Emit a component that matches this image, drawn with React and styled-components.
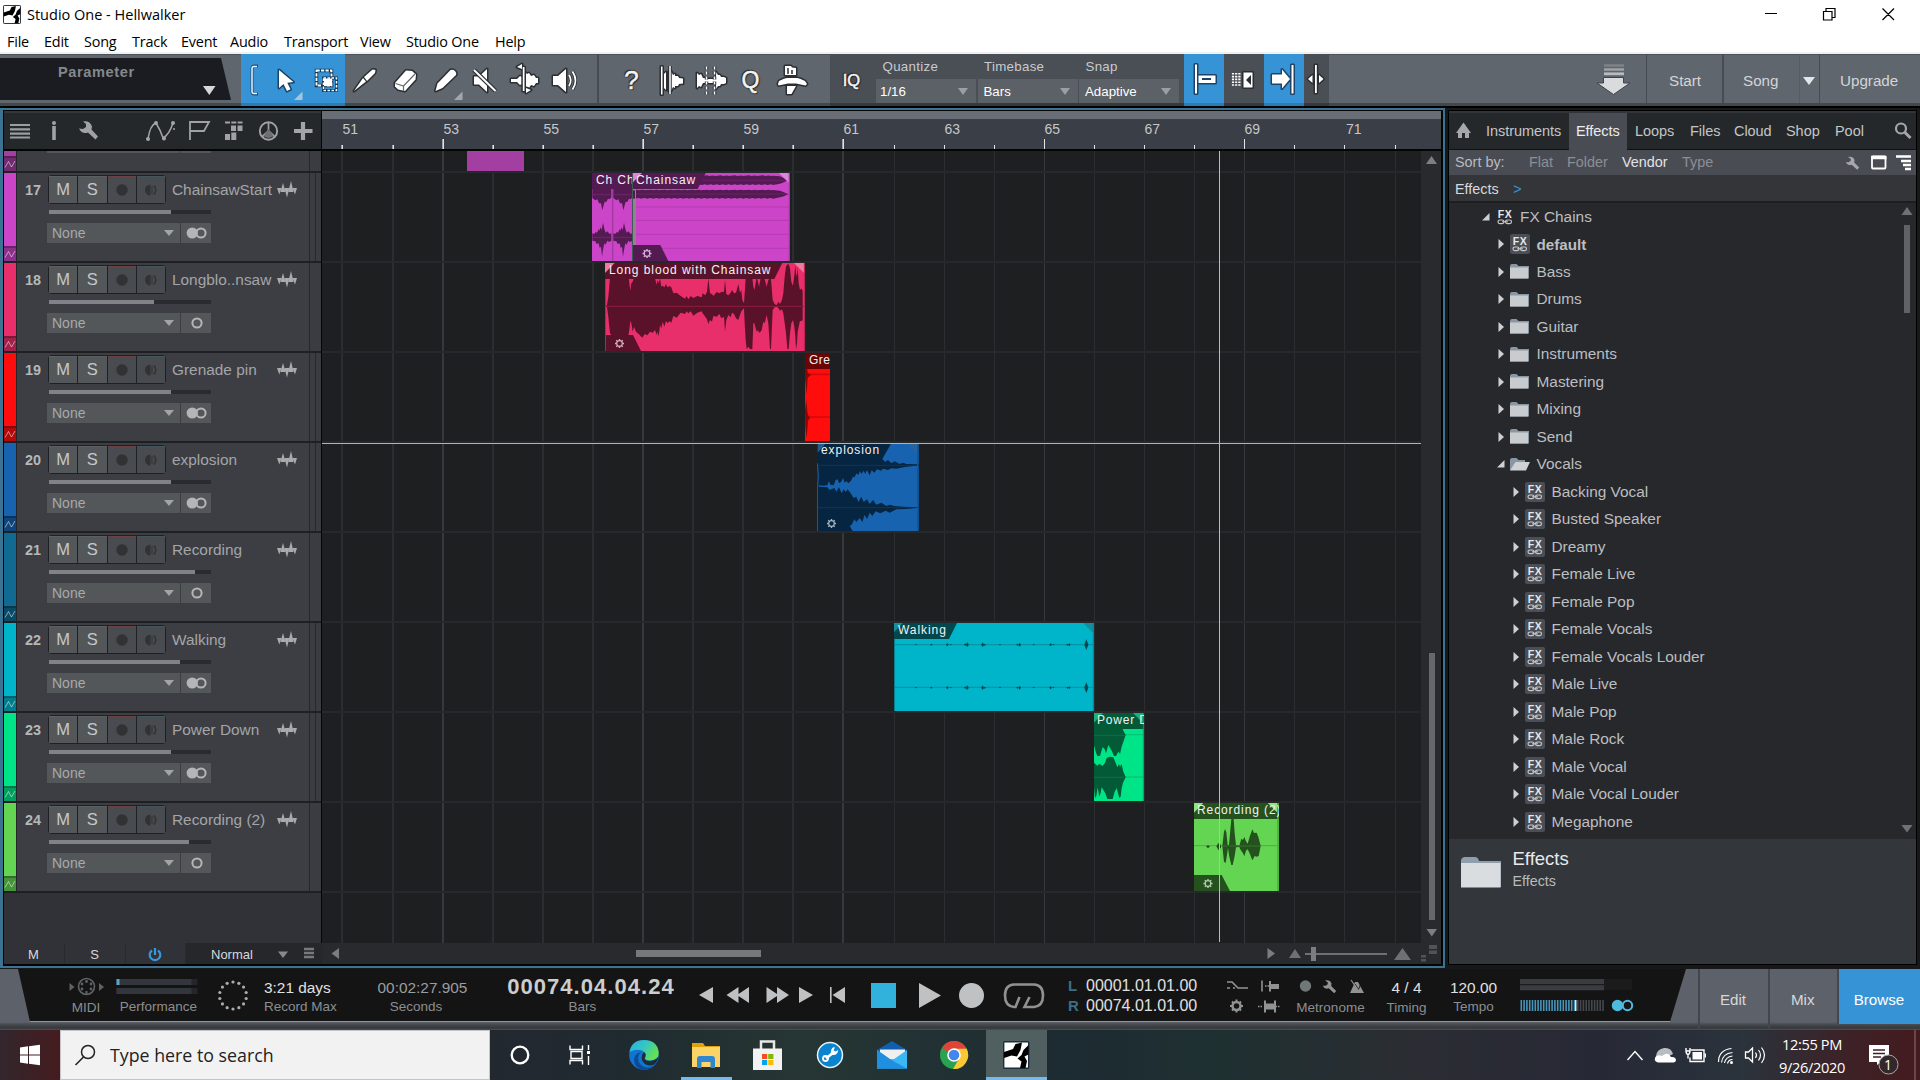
import React from "react";
import styled, { createGlobalStyle, css } from "styled-components";

const UI = `"Liberation Sans", Arial, sans-serif`;
const WIN = `"Open Sans", "Noto Sans", sans-serif`;

const Global = createGlobalStyle`
  * { box-sizing: border-box; }
  html, body { margin: 0; padding: 0; background: #000; }
  body { font-family: ${UI}; overflow: hidden; }
  svg { display: block; flex: none; }
`;

const Screen = styled.div`
  width: 1920px;
  height: 1080px;
  display: flex;
  flex-direction: column;
  background: #000;
  overflow: hidden;
  white-space: nowrap;
`;

/* Drawing whose coordinates are expressed in screen space. */
const Art = ({ x, y, w, h, children }) => (
  <svg width={w} height={h} viewBox={`${x} ${y} ${w} ${h}`} fill="none">
    {children}
  </svg>
);

const Spacer = styled.div`
  flex: ${(p) => (p.$w ? "none" : 1)};
  width: ${(p) => p.$w || 0}px;
`;

/* ---------- window chrome ---------- */

const TitleBar = styled.header`
  height: 28px;
  flex: none;
  display: flex;
  align-items: center;
  background: #fff;
  color: #000;
  font: 14.5px ${WIN};
`;
const TitleText = styled.span`
  margin-left: 6px;
  flex: 1;
`;
const MenuBar = styled.nav`
  height: 26px;
  flex: none;
  display: flex;
  align-items: center;
  padding: 2px 0 0 7px;
  background: #fff;
  border-bottom: 2px solid #eef0f1;
  color: #000;
  font: 14.4px ${WIN};
`;
const MenuItem = styled.span`
  width: ${(p) => p.$w}px;
  letter-spacing: -0.2px;
`;

const menus = [["File", 37], ["Edit", 40], ["Song", 48], ["Track", 49], ["Event", 49], ["Audio", 54], ["Transport", 76], ["View", 46], ["Studio One", 89], ["Help", 40]];

const LogoArt = () => (
  <>
    <rect x="0.7" y="0.7" width="25" height="26.6" rx="1" fill="#fff" stroke="#1d2c3a" strokeWidth="1.4" />
    <path d="M1 11 L10 8 L12.500 3 L19 1.500 L17.500 9 L14 15.500 L8.500 14.500 L1 17Z" fill="#000" />
    <path d="M25.500 4 L20.500 9 L18.500 14 L14.500 17.500 L18.500 20.500 L17 27 H22.500 L24 20 L21.500 15.500 L25.500 13.500Z" fill="#000" />
  </>
);

/* ---------- toolbar ---------- */

const ToolbarRow = styled.div`
  height: 54px;
  flex: none;
  display: flex;
  background: linear-gradient(#4b5158 0 1px, #5f666e 1px 49px, #43484d 49px 52px, #000 52px);
`;
const ParameterWell = styled.div`
  width: 231px;
  height: 42px;
  margin: 4px 10px 0 0;
  background: #1a1c21;
  clip-path: polygon(0 0, 221px 0, 231px 100%, 0 100%);
  display: flex;
  color: #85888c;
  font: bold 14.6px/28px ${UI};
  padding-left: 58px;
  letter-spacing: 0.6px;
`;
const ParameterName = styled.span`width: 145px;`;
const ToolCell = styled.div`
  width: ${(p) => p.$w}px;
  height: 52px;
  flex: none;
  display: flex;
  justify-content: center;
  align-items: center;
  background: ${(p) => (p.$on ? "linear-gradient(#3693d6 0 49px, #2d7bb3 49px)" : p.$dark ? "linear-gradient(#4a4e55 0 49px, #36393e 49px)" : "transparent")};
  color: #f4f4f4;
  font: ${(p) => p.$fs || 22}px ${UI};
  padding-left: ${(p) => p.$pl || 0}px;
  ${(p) => p.$glyph && css`
    text-shadow: 0 0 1px #222, 0 0 2px #222, 1px 1px 1px #222, -1px -1px 1px #222;
    -webkit-text-stroke: 0.5px #f4f4f4;
  `}
`;
const Divider = styled.div`
  width: ${(p) => p.$w || 2}px;
  height: 49px;
  flex: none;
  background: ${(p) => p.$c || "#474c53"};
`;
const FieldGroup = styled.div`
  width: 308px;
  height: 52px;
  flex: none;
  display: flex;
  gap: 1.5px;
  background: linear-gradient(#4a4e55 0 49px, #36393e 49px);
`;
const Field = styled.div`
  width: 100px;
  padding-top: 1px;
  color: #c9cbce;
  font: 13.3px ${UI};
  display: flex;
  flex-direction: column;
`;
const FieldLabel = styled.span`
  height: 24px;
  line-height: 23px;
  padding-left: 6.5px;
  letter-spacing: 0.3px;
`;
const FieldValue = styled.div`
  height: 24px;
  padding: 0 8px 0 ${(p) => p.$pl || 6}px;
  display: flex;
  align-items: center;
  justify-content: space-between;
  background: #5c6067;
  color: #fff;
`;
const Caret = styled.i`
  border: ${(p) => p.$s || 5.5}px solid transparent;
  border-top: ${(p) => p.$h || 7}px solid ${(p) => p.$c || "#9b9ea3"};
  border-bottom: 0;
`;
const PageButton = styled.div`
  width: ${(p) => p.$w}px;
  height: 49px;
  padding-left: ${(p) => p.$pl || 0}px;
  display: flex;
  align-items: center;
  padding-top: 4px;
  color: #d3d5d7;
  font: 15.2px ${UI};
`;

const ol = { stroke: "#2b2e33", strokeWidth: 3, strokeLinejoin: "round", paintOrder: "stroke" };

const Toolbar = () => (
  <ToolbarRow>
    <ParameterWell>
      <ParameterName>Parameter</ParameterName>
      <Art x={203} y={58} w={13} h={42}><path d="M203 86h12.5l-6.2 9z" fill="#d5d7d9" /></Art>
    </ParameterWell>
    <ToolCell $w={24} $on><Art x={241} y={54} w={24} h={52}><path d="M258 66h-3.5q-2.500 0-2.500 2.500v23q0 2.500 2.500 2.500h3.500" stroke="#1f4f77" strokeWidth="3" /><path d="M257 66.500h-3q-2 0-2 2v23q0 2 2 2h3" stroke="#e8f2fa" strokeWidth="1.500" /></Art></ToolCell>
    <ToolCell $w={42} $on><Art x={265} y={54} w={42} h={52}>
      <path d="M279 70v18l4.500-4 3.500 7 3.500-1.700-3.200-6.600 6-.6z" fill="#fff" {...ol} stroke="#1c4468" />
      <path d="M302.500 91.500v8.500h-8.500z" fill="#a5c4dd" /></Art></ToolCell>
    <ToolCell $w={38} $on><Art x={307} y={54} w={38} h={52}>
      <rect x="316.500" y="70.500" width="15" height="15" stroke="#17395a" strokeWidth="3.500" />
      <rect x="316.500" y="70.500" width="15" height="15" stroke="#fff" strokeWidth="1.800" strokeDasharray="3.200 1.300" />
      <rect x="323.500" y="78" width="13" height="12.500" stroke="#17395a" strokeWidth="3" />
      <rect x="323.500" y="78" width="13" height="12.500" stroke="#fff" strokeWidth="1.500" strokeDasharray="2.500 1.500" />
      <rect x="324" y="78.500" width="8" height="7.500" fill="#fff" /></Art></ToolCell>
    <ToolCell $w={40}><Art x={345} y={54} w={40} h={52}>
      <path d="M354 91l9-13 3 3.500zM364 77l8.500-7.500 3 .5-.5 3-8 8z" fill="#fff" {...ol} /></Art></ToolCell>
    <ToolCell $w={41}><Art x={385} y={54} w={41} h={52}>
      <path d="M395 83l11-12.500 6 .5 4 3.500-.5 5-10.500 11.500-7-1.500-3-3z" fill="#fff" {...ol} />
      <path d="M395.500 83.500l8 2.500 11.500-12M403.500 86v5" stroke="#666a70" strokeWidth="1.200" /></Art></ToolCell>
    <ToolCell $w={39}><Art x={426} y={54} w={39} h={52}>
      <path d="M435.500 91l2-7.500 13-13.500q2.500-1 4.500 1t1 4l-13.500 13z" fill="#fff" {...ol} />
      <path d="M462.500 91.500v8.500h-8.500z" fill="#a3a7ac" /></Art></ToolCell>
    <ToolCell $w={38}><Art x={465} y={54} w={38} h={52}>
      <path d="M474 76.500h5l8-7.500v23l-8-7.500h-5z" fill="#fff" {...ol} />
      <path d="M474 70l21.500 21" stroke="#2b2e33" strokeWidth="4.500" /><path d="M474 70l21.500 21" stroke="#fff" strokeWidth="2" /></Art></ToolCell>
    <ToolCell $w={42}><Art x={503} y={54} w={42} h={52}>
      <path d="M511 79h6l3-3 2 1v7l-2 1-3-3h-6zM525 72l2 2 2-1 2 3 3-1 2 3h2v5h-2l-2 3-3-1-2 3-2-1-2 2z" fill="#fff" {...ol} />
      <path d="M522 64v5l-5-2zM526 93v-5l5 2zM522.800 67h1.700v24h-1.700z" fill="#fff" {...ol} /></Art></ToolCell>
    <ToolCell $w={52}><Art x={545} y={54} w={52} h={52}>
      <path d="M553 76h5l8-7v23l-8-7h-5z" fill="#fff" {...ol} />
      <path d="M569 75q3.500 5.500 0 11M572.500 71.500q6 9 0 18" stroke="#2b2e33" strokeWidth="3.500" /><path d="M569 75q3.500 5.500 0 11M572.500 71.500q6 9 0 18" stroke="#fff" strokeWidth="1.800" /></Art></ToolCell>
    <Divider />
    <ToolCell $w={59} $pl={6} $glyph $fs={26}>?</ToolCell>
    <ToolCell $w={32}><Art x={658} y={54} w={32} h={52}>
      <path d="M661 66.500h1.500v28h-1.500zM664 74l2-2v18l-2-2zM669 71h2l2 4 2-1v2h3l1 2 4 .5v5l-4 .5-1 2h-3v2l-2-1-2 4h-2z" fill="#fff" {...ol} /><path d="M670 66v28" stroke="#2b2e33" strokeWidth="3.500" /><path d="M670 66v28" stroke="#fff" strokeWidth="1.500" /></Art></ToolCell>
    <ToolCell $w={45}><Art x={690} y={54} w={45} h={52}>
      <path d="M697 73l2 2 2-1 2 4h3v5h-3l-2 4-2-1-2 2zM716 72l2 3h2l1 2h3l2 1v5l-2 1h-3l-1 2h-2l-2 3zM706 79h10v4h-10z" fill="#fff" {...ol} />
      <path d="M706.500 66.500v28M714.500 66.500v28" stroke="#2b2e33" strokeWidth="3.500" strokeDasharray="3 2" /><path d="M706.500 66.500v28M714.500 66.500v28" stroke="#fff" strokeWidth="1.500" strokeDasharray="3 2" /></Art></ToolCell>
    <ToolCell $w={31} $glyph $fs={23}>Q</ToolCell>
    <ToolCell $w={64}><Art x={766} y={54} w={64} h={52}>
      <path d="M785 75v-9h6l1 1.500 4 .5v7zM778 84l1-3q6-3 8-3h10q2 0 8 3l2 3-1.500 1.500-9.500-2h-8l-9.500 2zM787 86h9l-4.500 8h-4.500z" fill="#fff" {...ol} />
      <path d="M788 68v6M792 70v4" stroke="#2b2e33" strokeWidth="1.500" /></Art></ToolCell>
    <ToolCell $w={43} $dark $glyph $fs={16.500}>IQ</ToolCell>
    <ToolCell $w={3} $dark />
    <FieldGroup>
      {[["Quantize", "1/16"], ["Timebase", "Bars"], ["Snap", "Adaptive"]].map(([l, v], i) => (
        <Field key={l}>
          <FieldLabel>{l}</FieldLabel>
          <FieldValue $pl={i ? 6 : 4}>{v}<Caret /></FieldValue>
        </Field>
      ))}
    </FieldGroup>
    <ToolCell $w={40} $on><Art x={1184} y={54} w={40} h={52}>
      <path d="M1195 64.500h2v29h-2zM1198.500 75.500h17v7.500h-17z" fill="#fff" {...ol} stroke="#1c4468" /><path d="M1202 79h9" stroke="#1c4468" strokeWidth="2" /></Art></ToolCell>
    <ToolCell $w={40} $dark><Art x={1224} y={54} w={40} h={52}>
      <path d="M1233 73v14M1236.200 73v14M1239.400 73v14" stroke="#fff" strokeWidth="2.200" strokeDasharray="1.600 1.200" />
      <path d="M1243.500 72.500h9v15h-9z" fill="#fff" {...ol} /><path d="M1251 75v10l-5-5z" fill="#2b2e33" /></Art></ToolCell>
    <ToolCell $w={40} $on><Art x={1264} y={54} w={40} h={52}>
      <path d="M1272 74.500h10v-5l8 9.500-8 9.500v-5h-10zM1291.500 65h2v28.500h-2z" fill="#fff" {...ol} stroke="#1c4468" /></Art></ToolCell>
    <ToolCell $w={25} $dark><Art x={1304} y={54} w={25} h={52}>
      <path d="M1315 65h1.800v28h-1.800zM1312.500 75v8l-4.500-4zM1319 75v8l4.500-4z" fill="#fff" {...ol} /></Art></ToolCell>
    <Spacer />
    <Art x={1590} y={54} w={56} h={52}>
      <path d="M1604 65.500h20" stroke="#7d8389" strokeWidth="2.500" /><path d="M1604 69.500h20" stroke="#9da2a7" strokeWidth="2.500" /><path d="M1604 73.800h20" stroke="#b8bbbf" strokeWidth="2.800" />
      <path d="M1603.500 77.500h20v5.500h6.500l-16.500 11.500-16.500-11.500h6.500z" fill="#d9dbdd" stroke="#3f4348" /></Art>
    <Divider $w={1} />
    <PageButton $w={75} $pl={22}>Start</PageButton>
    <Divider />
    <PageButton $w={75} $pl={19}>Song</PageButton>
    <Divider $w={1} $c="#565c64" />
    <PageButton $w={19} $pl={3}><Caret $s={6} $h={8} $c="#e4e6e7" /></PageButton>
    <Divider $w={1} />
    <PageButton $w={100} $pl={20}>Upgrade</PageButton>
  </ToolbarRow>
);

/* ---------- arrange panel ---------- */

const Workspace = styled.main`
  height: 861px;
  flex: none;
  display: flex;
  background: #17181a;
`;
const ArrangePanel = styled.section`
  width: 1445px;
  height: 860px;
  border: 2px solid #3a7492;
  border-left-width: 3px;
  padding: 1px 2px 2px 1px;
  background: #050505;
  display: flex;
  flex-direction: column;
`;
const ArrangeTop = styled.div`
  height: 832px;
  display: flex;
  gap: 1px;
`;
const TrackColumn = styled.div`
  width: 317px;
  display: flex;
  flex-direction: column;
`;
const TrackTools = styled.div`
  height: 38px;
  flex: none;
  background: linear-gradient(#33363a 0 2px, #25282b 2px);
`;
const TrackList = styled.div`
  margin-top: 2px;
  flex: 1;
  background: #303237;
`;
const TrackRow = styled.div`
  height: ${(p) => p.$h || 90}px;
  border-bottom: 2px solid #1f2023;
  display: flex;
  background: #3c3e43;
`;
const ColorStrip = styled.div`
  width: 13px;
  border-right: 1px solid #25262a;
  display: flex;
  flex-direction: column;
  background: ${(p) => p.$c};
`;
const AutoTag = styled.div`
  margin-top: auto;
  height: 15px;
  background: rgba(0, 0, 0, 0.3);
  border-top: 2px solid rgba(0, 0, 0, 0.25);
`;
const NumberCell = styled.div`
  width: 30px;
  padding: 8px 0 0 8px;
  color: #b5b7b9;
  font: bold 14.400px/18px ${UI};
`;
const TrackBody = styled.div`
  flex: 1;
  display: flex;
  flex-direction: column;
`;
const TrackHead = styled.div`
  height: 32px;
  padding-top: 2px;
  display: flex;
  align-items: flex-start;
`;
const ButtonGroup = styled.div`
  margin-left: 1px;
  width: 118px;
  height: 29px;
  padding: 1px;
  border-radius: 4px;
  background: #1e2023;
  display: flex;
  gap: 1px;
`;
const PadButton = styled.div`
  flex: 1;
  display: flex;
  align-items: center;
  justify-content: center;
  padding-bottom: 1px;
  background: ${(p) => (p.$dim ? "#484b4f" : "#54575a")};
  border-top: 1px solid ${(p) => p.$top || "#5c6063"};
  color: #c6c8c9;
  font: 16.500px ${UI};
`;
const TrackName = styled.span`
  width: 105px;
  margin-left: 6px;
  line-height: 29px;
  font-size: 15.400px;
  color: #a3a5a8;
`;
const Fader = styled.div`
  margin: 5px 0 0 2px;
  width: 162px;
  height: 4px;
  background: #292b2f;
`;
const FaderFill = styled.div`
  height: 4px;
  width: ${(p) => p.$w}px;
  background: #7f8286;
`;
const InputRow = styled.div`
  margin-top: 9px;
  height: 20px;
  display: flex;
  gap: 1px;
`;
const InputSelect = styled.div`
  width: 133px;
  padding: 0 6px 0 5px;
  background: #54575a;
  color: #a7a9ab;
  font: 14px ${UI};
  display: flex;
  align-items: center;
  justify-content: space-between;
`;
const ChannelMode = styled.div`
  width: 30px;
  padding-left: 1px;
  background: #54575a;
  display: flex;
  align-items: center;
  justify-content: center;
`;
const TrackMeter = styled.div`
  width: 12px;
  border-left: 1px solid #27282b;
  padding-left: 5px;
  background: #3a3c41;
`;
const MeterSplit = styled.div`
  height: 100%;
  width: 1px;
  background: ${(p) => (p.$stereo ? "#27282b" : "transparent")};
`;

const tracks = [
  [17, "ChainsawStart", "#cc45c8", 122, 1],
  [18, "Longblo..nsaw", "#e82f6b", 105, 0],
  [19, "Grenade pin", "#ff0d0d", 122, 1],
  [20, "explosion", "#1763b0", 122, 1],
  [21, "Recording", "#116a92", 146, 0],
  [22, "Walking", "#00b5c9", 131, 1],
  [23, "Power Down", "#00e488", 122, 1],
  [24, "Recording (2)", "#63d552", 140, 0],
];

const Zig = () => (
  <svg width="12" height="13" viewBox="0 0 12 13" fill="none"><path d="M1 9.500l3.500-6 3 5.500 3.500-6" stroke="rgba(255,255,255,.5)" /></svg>
);
const Stereo = ({ c = "#b3b5b7" }) => (
  <svg width="22" height="12" viewBox="0 0 22 12" fill="none"><circle cx="6.200" cy="6" r="5.600" fill={c} /><circle cx="15" cy="6" r="4.600" stroke={c} strokeWidth="2" /></svg>
);
const Mono = () => (
  <svg width="12" height="12" viewBox="0 0 12 12" fill="none"><circle cx="6" cy="6" r="4.600" stroke="#b3b5b7" strokeWidth="2" /></svg>
);

const Track = ({ t: [n, name, color, fill, stereo] }) => (
  <TrackRow>
    <ColorStrip $c={color}><AutoTag><Zig /></AutoTag></ColorStrip>
    <NumberCell>{n}</NumberCell>
    <TrackBody>
      <TrackHead>
        <ButtonGroup>
          <PadButton>M</PadButton>
          <PadButton>S</PadButton>
          <PadButton $dim $top="#6b4144"><svg width="12" height="12"><circle cx="6" cy="6" r="5.700" fill="#303234" /></svg></PadButton>
          <PadButton $dim $top="#44565c"><svg width="12" height="12" viewBox="0 0 12 12" fill="none"><path d="M5.500 0.500a5.500 5.500 0 0 0 0 11z" fill="#303234" /><path d="M7 2v8" stroke="#303234" /><path d="M9 1.500q3.500 4.500 0 9" stroke="#303234" strokeWidth="1.500" /></svg></PadButton>
        </ButtonGroup>
        <TrackName>{name}</TrackName>
        <svg width="20" height="30" viewBox="0 0 20 30" fill="#a9abad">
          <path d="M0 13H4.600L2.300 19.500Z" /><path d="M3.400 17L6 8L8.600 17Z" /><path d="M7.400 13H12.400L10 22.500Z" /><path d="M11.200 17L14 6L16.600 17Z" /><path d="M15.400 13H20L18 19.500Z" />
        </svg>
      </TrackHead>
      <Fader><FaderFill $w={fill} /></Fader>
      <InputRow>
        <InputSelect>None<Caret $s={5} $h={6} $c="#a2a4a6" /></InputSelect>
        <ChannelMode>{stereo ? <Stereo /> : <Mono />}</ChannelMode>
      </InputRow>
    </TrackBody>
    <TrackMeter><MeterSplit $stereo={stereo} /></TrackMeter>
  </TrackRow>
);

const TimelineColumn = styled.div`
  flex: 1;
  display: flex;
  flex-direction: column;
`;
const Ruler = styled.div`
  position: relative;
  height: 38px;
  flex: none;
  background: linear-gradient(#696d75 0 8px, #3a3e46 8px);
`;
const RulerLabel = styled.span`
  position: absolute;
  top: 10px;
  line-height: 16px;
  font-size: 14px;
  color: #c5c7c9;
`;
const TimelineBody = styled.div`
  margin-top: 2px;
  flex: 1;
  display: flex;
`;
const Canvas = styled.div`
  position: relative;
  width: 1099px;
  background: #1e1f21;
  overflow: hidden;
`;
const ScrollGutter = styled.div`
  flex: 1;
  background: #292a2e;
`;
const Clip = styled.div`
  position: absolute;
  left: ${(p) => p.$x - 322}px;
  top: ${(p) => p.$y - 151}px;
  width: ${(p) => p.$w}px;
  height: ${(p) => p.$h || 88}px;
  background: ${(p) => p.$c};
  overflow: hidden;
  svg { position: absolute; left: 0; top: 0; }
`;
const ClipName = styled.span`
  position: absolute;
  left: ${(p) => p.$l || 4}px;
  top: 0;
  line-height: 15px;
  font-size: 12px;
  letter-spacing: ${(p) => p.$ls || 0.93}px;
  color: #f2f2f2;
`;

const barX = (b) => Math.round(442.6 + (b - 53) * 50.1);
const bars = Array.from({ length: 22 }, (_, i) => 51 + i);

const mirror = (pts) =>
  pts.map(([x, a]) => `${x},${a}`).join(" ") + " " + [...pts].reverse().map(([x, , b]) => `${x},${b}`).join(" ");

const longWave = [[138,467,470],[141,465,472],[145,440,500],[150,385,550],[155,340,556],[205,375,556],[208,400,540],[211,422,512],[214,400,520],[218,395,545],[222,385,530],[228,380,545],[236,380,552],[247,380,563],[254,380,552],[262,380,556],[270,380,545],[278,380,548],[285,385,540],[290,404,555],[293,390,545],[296,400,560],[300,385,525],[304,410,535],[308,407,515],[313,412,530],[318,402,512],[322,412,520],[328,408,514],[334,412,518],[340,430,498],[350,428,503],[362,438,488],[375,446,492],[380,438,484],[385,448,490],[392,438,484],[400,444,497],[412,438,488],[425,442,484],[428,430,490],[436,436,500],[441,425,508],[445,385,522],[450,430,510],[456,432,515],[460,438,498],[470,426,500],[478,430,492],[484,426,505],[492,425,500],[495,390,545],[499,432,510],[505,436,495],[512,428,502],[516,420,488],[522,430,492],[528,428,505],[535,402,510],[540,428,495],[544,420,484],[547,450,480],[552,460,475],[554,430,520],[557,385,570],[560,385,597],[565,385,590],[570,385,597],[577,385,597],[580,410,520],[583,420,520],[587,400,535],[590,380,545],[594,395,540],[597,410,548],[602,385,545],[605,385,540],[610,385,515],[614,388,520],[620,410,495],[625,390,520],[630,385,597],[633,388,597],[638,450,480],[644,463,472],[650,465,470],[655,455,474],[660,462,482],[666,450,478],[670,430,490],[674,380,520],[678,350,550],[682,343,597],[686,343,597],[690,355,550],[694,395,520],[699,408,510],[703,375,530],[706,345,560],[708,370,597],[711,380,580],[713,350,545],[716,400,530],[720,420,512],[724,415,514],[728,422,510]];

const expBlue1 = "778,1006 790,1007 803,1006 808,993 812,1004 822,1006 828,990 834,988 838,1000 844,996 850,984 855,998 860,993 866,1000 874,992 880,980 885,982 890,970 896,975 901,963 905,972 912,962 917,972 922,960 930,976 936,961 944,968 952,958 964,962 970,956 985,960 995,955 1010,956 1035,951 1068,947 1077,947 1077,1072 1068,1072 1030,1070 1004,1068 990,1064 980,1068 965,1058 950,1064 940,1050 930,1062 922,1048 912,1056 905,1040 896,1056 890,1040 882,1044 872,1028 864,1018 858,1026 852,1018 846,1030 838,1012 830,1025 824,1014 810,1020 803,1012 778,1010";
const expBlue2 = "1077,1074 1068,1074 1040,1077 1010,1078 990,1088 978,1082 962,1090 948,1084 938,1098 930,1088 922,1108 915,1094 908,1116 900,1104 890,1116 884,1108 876,1124 870,1128 879,1143 1077,1143";
const expBlue0 = "968,927 994,881 1077,881 1077,943 1068,943 1040,942 1030,938 1020,942 1005,934 995,940 985,930 976,936";

const Cog = ({ x, y, c }) => (
  <g stroke={c} transform={`translate(${x} ${y})`}>
    <circle r="2.800" strokeWidth="1.200" />
    <path d="M0-4.500v1.500M0 3v1.500M-4.500 0h1.500M3 0h1.500M-3.200-3.200l1 1M2.200 2.200l1 1M3.200-3.200l-1 1M-2.200 2.200l-1 1" strokeWidth="1.400" />
  </g>
);

/* Waveform layer: vertices use a grid three times finer than the clip. */
const Wave = ({ ox, oy, w, children }) => (
  <svg width={w} height="88" viewBox={`${ox} ${oy} ${w * 3} 264`} fill="none">{children}</svg>
);
const Overlay = ({ w, children }) => <svg width={w} height="88" fill="none">{children}</svg>;

const shotLow = "98,250 104,252 108,246 112,248 117,238 119,242 122,232 126,240 130,218 134,236 138,248 143,244 150,252 155,250 155,272 148,276 143,272 138,284 134,280 130,300 127,320 124,290 120,294 117,280 111,282 107,274 98,272";
const shotTop = "98,117 155,117 155,142 150,148 145,146 140,156 135,155 132,166 128,181 124,160 118,160 113,148 107,151 98,144";

const buzz = (y0, y1) => {
  const top = [], bot = [];
  for (let x = 219; x <= 640; x += 6) {
    const j = ((x * 7919) % 7) / 3;
    top.push(`${x},${y0 + j}`);
    bot.unshift(`${x},${y1 - ((x * 104729) % 9) / 3}`);
  }
  const m = (y0 + y1) / 2;
  return [...top, `660,${y0 + 3}`, `672,${m - 6}`, `684,${m}`, `672,${m + 6}`, `660,${y1 - 4}`, ...bot].join(" ");
};

const walkMarks = [[168, 2], [214, 3], [262, 5], [272, 2], [316, 4], [322, 7], [368, 7], [374, 3], [420, 2], [472, 3], [479, 6], [521, 2], [572, 5], [580, 2], [622, 3], [628, 4], [679, 16]];

const Timeline = () => (
  <TimelineColumn>
    <Ruler>
      <svg width="1119" height="38" viewBox="322 111 1119 38">
        {bars.map((b) => {
          const major = (b - 53) % 4 === 0;
          return <rect key={b} x={barX(b) - (b < 62 ? 0.6 : 0)} y={major ? 139 : 145} width={b < 62 ? 1.600 : 1} height={major ? 11 : 5} fill="#e2e3e4" />;
        })}
      </svg>
      {bars.filter((b) => b % 2).map((b) => (
        <RulerLabel key={b} style={{ left: barX(b) - 322 + (b === 71 ? 2 : 0.5) }}>{b}</RulerLabel>
      ))}
    </Ruler>
    <TimelineBody>
      <Canvas>
        <svg width="1099" height="792" viewBox="322 151 1099 792">
          {bars.map((b) => (
            <rect key={b} x={barX(b) - (b < 62 ? 1 : 0)} y="151" width={b < 62 ? 2 : 1} height="792" fill={(b - 53) % 4 === 0 ? "#37383d" : "#2c2d30"} />
          ))}
          {[171, 261, 351, 441, 531, 621, 711, 801, 891].map((y) => (
            <rect key={y} x="322" y={y} width="1099" height="2" fill="#27282b" />
          ))}
          <rect x="322" y="443" width="1099" height="1" fill="#b2b3b4" />
        </svg>
        <Clip $x={467} $y={151} $w={57} $h={20} $c="#a23fa0" />
        <Clip $x={592} $y={173} $w={41} $c="#cc45c8">
          <Wave ox={97} oy={69} w={41}>
            <rect x="97" y="69" width="123" height="48" fill="#541b53" />
            <rect x="157" y="117" width="4" height="216" fill="#a238a0" />
            {[0, 63].map((dx) => (
              <g key={dx} transform={`translate(${dx} 0)`}>
                <polygon points={shotTop} fill="#541b53" /><polygon points={shotLow} fill="#541b53" />
                <path d="M98 134h58M98 262h58" stroke="#7a2c79" strokeWidth="2" />
              </g>
            ))}
          </Wave>
          <ClipName $ls={0.9}>Ch Ch</ClipName>
        </Clip>
        <Clip $x={632} $y={173} $w={158} $c="#cc45c8">
          <Wave ox={216} oy={69} w={158}>
            <path d="M228 171h461M228 211h461M228 253h461M228 295h461M683 92h6M683 132h6" stroke="#b43bb1" strokeWidth="3" />
            <polygon points={buzz(76, 105)} fill="#541b53" /><polygon points={buzz(119, 146)} fill="#541b53" />
            <path d="M420 91h260M228 132h455" stroke="#702571" strokeWidth="2" />
            <rect x="216" y="117" width="12" height="168" fill="#8e848e" /><rect x="219" y="121" width="6" height="25" fill="#541b53" />
            <polygon points="216,69 437,69 413,117 216,117" fill="#541b53" />
            <polygon points="216,285 301,285 325,333 216,333" fill="#541b53" />
            <polygon points="219,69 246,69 219,97" fill="#dd86da" /><polygon points="657,69 687,69 687,99" fill="#dd86da" />
            <rect x="216" y="69" width="3" height="264" fill="#3f5a52" /><rect x="686" y="69" width="4" height="264" fill="#a238a0" />
          </Wave>
          <Overlay w={158}><Cog x={15} y={80.500} c="#d7b5d6" /></Overlay>
          <ClipName>Chainsaw</ClipName>
        </Clip>
        <Clip $x={605} $y={263} $w={200} $c="#e82f6b">
          <Wave ox={135} oy={339} w={200}>
            <polygon points={mirror(longWave)} fill="#5a122a" />
            <path d="M136 469h596" stroke="#8d1d42" strokeWidth="3" />
            <polygon points="135,339 667,339 643,387 135,387" fill="#5a122a" />
            <polygon points="135,555 219,555 243,603 135,603" fill="#5a122a" />
            <polygon points="135,339 164,339 135,369" fill="#f17aa0" /><polygon points="702,339 732,339 732,369" fill="#f17aa0" />
            <path d="M136.500 387v216M733 339v264" stroke="#b52553" strokeWidth="3" />
          </Wave>
          <Overlay w={200}><Cog x={14.500} y={80.500} c="#dbb3c0" /></Overlay>
          <ClipName>Long blood with Chainsaw</ClipName>
        </Clip>
        <Clip $x={805} $y={353} $w={25} $c="#ff0d0d">
          <Wave ox={735} oy={609} w={25}>
            <path d="M745 673h65M745 801h65" stroke="#d40a0a" strokeWidth="5" />
            <rect x="735" y="609" width="75" height="48" fill="#6a0505" />
            <polygon points="735,657 742,657 743,668 753,675 743,683 740,735 737,700 735,690" fill="#8a0606" />
            <polygon points="735,780 739,750 742,785 744,795 750,803 744,812 740,865 736,830" fill="#8a0606" />
          </Wave>
          <ClipName $ls={0.400}>Gre</ClipName>
        </Clip>
        <Clip $x={817} $y={443} $w={102} $c="#062541">
          <Wave ox={772} oy={879} w={102}>
            <polygon points={expBlue0} fill="#1763b0" /><polygon points={expBlue1} fill="#1763b0" /><polygon points={expBlue2} fill="#1763b0" />
            <path d="M773 946h296M773 1073h296" stroke="#0d3a66" strokeWidth="2.500" />
            <polygon points="774,879 799,879 774,908" fill="#265a8f" /><polygon points="1045,881 1072,881 1072,909" fill="#2b639d" />
            <path d="M773 1143V1020l3-40-3-40M1074 879v264" stroke="#185593" strokeWidth="4" />
            <rect x="772" y="879" width="306" height="3" fill="#b2b3b4" />
          </Wave>
          <Overlay w={102}><Cog x={14.500} y={80.500} c="#a9b9c8" /></Overlay>
          <ClipName>explosion</ClipName>
        </Clip>
        <Clip $x={894} $y={623} $w={200} $c="#00b5c9">
          <Wave ox={102} oy={69} w={200}>
            <path d="M102 134h597M102 262h597" stroke="#0396a7" strokeWidth="4" />
            {walkMarks.map(([x, s]) => (
              <g key={x} fill="#02474d">
                <polygon points={`${x - 3 - s / 5},134 ${x},${134 - s} ${x + 3 + s / 5},134 ${x},${134 + s}`} />
                <polygon points={`${x - 3 - s / 5},263 ${x},${263 - s} ${x + 3 + s / 5},263 ${x},${263 + s}`} />
              </g>
            ))}
            <polygon points="102,69 291,69 267,117 102,117" fill="#02474d" />
            <polygon points="102,69 128,69 102,97" fill="#128f9d" /><polygon points="670,69 699,69 699,99" fill="#128f9d" />
            <path d="M700 69v264M103.500 117v216" stroke="#087f8c" strokeWidth="3" />
          </Wave>
          <ClipName>Walking</ClipName>
        </Clip>
        <Clip $x={1094} $y={713} $w={50} $c="#00e488">
          <Wave ox={702} oy={339} w={50}>
            <path d="M795 404h55M795 531h55" stroke="#05c477" strokeWidth="4" />
            <polygon points="702,380 786,380 790,392 797,405 789,428 785,440 780,462 775,455 768,468 762,468 755,452 745,435 738,460 734,448 728,441 720,468 712,468 706,452 702,436" fill="#025a36" />
            <polygon points="702,488 712,497 718,491 728,498 735,488 740,474 750,470 760,472 766,486 772,502 777,492 780,500 785,492 789,512 797,532 789,548 785,565 782,590 778,594 770,564 764,575 758,597 742,597 736,580 725,562 722,578 718,590 713,562 709,588 705,594 702,560" fill="#025a36" />
            <path d="M702 406h92M702 532h92" stroke="#037a4a" strokeWidth="2.500" />
            <rect x="702" y="339" width="150" height="48" fill="#025a36" />
            <polygon points="702,339 729,339 702,368" fill="#17b276" /><polygon points="819,339 849,339 849,369" fill="#17b276" />
            <path d="M850 339v264" stroke="#069e61" strokeWidth="3" />
          </Wave>
          <ClipName $l={3} $ls={0.800}>Power Down</ClipName>
        </Clip>
        <Clip $x={1194} $y={803} $w={85} $c="#63d552">
          <Wave ox={1002} oy={609} w={85}>
            <path d="M1002 737h250" stroke="#4cae3e" strokeWidth="3" />
            <g fill="#25511f">
              <polygon points="1038,739 1044,736 1050,739 1044,745" />
              <polygon points="1069,739 1075,729 1083,735 1083,742 1076,751" />
              <polygon points="1087,738 1092,695 1095,687 1099,697 1103,735 1107,735 1111,690 1114,657 1121,657 1124,700 1128,736 1138,737 1144,716 1149,720 1153,711 1158,724 1163,731 1169,710 1177,688 1182,699 1190,698 1196,714 1202,738 1196,768 1190,770 1184,768 1177,781 1170,763 1163,748 1158,752 1153,769 1149,760 1142,750 1138,741 1128,742 1124,768 1118,795 1114,795 1108,770 1104,744 1101,765 1097,789 1092,785" />
              <rect x="1002" y="609" width="255" height="48" />
              <polygon points="1002,825 1085,825 1110,873 1002,873" />
            </g>
            <path d="M1085 738h117" stroke="#3a7a30" strokeWidth="2.500" />
            <polygon points="1002,609 1030,609 1002,638" fill="#8fe383" /><polygon points="1223,609 1252,609 1252,638" fill="#8fe383" />
            <path d="M1254 609v264" stroke="#4cae3e" strokeWidth="5" />
          </Wave>
          <Overlay w={85}><Cog x={14} y={80.500} c="#b5d3b0" /></Overlay>
          <ClipName $l={3} $ls={0.900}>Recording (2)</ClipName>
        </Clip>
        <Playhead />
      </Canvas>
      <ScrollGutter>
        <Art x={1421} y={151} w={20} h={792}>
          <path d="M1426 164h11l-5.500-8zM1426.500 929h10.500l-5.200 7.500z" fill="#7c7e82" />
          <rect x="1429" y="653" width="6" height="267" fill="#66686b" />
        </Art>
      </ScrollGutter>
    </TimelineBody>
  </TimelineColumn>
);

const Playhead = styled.div`
  position: absolute;
  left: 897px;
  top: 0;
  width: 1px;
  height: 791px;
  background: #b9babb;
`;

const FooterBar = styled.div`
  height: 21px;
  display: flex;
  background: #292a2e;
`;
const FooterButton = styled.div`
  width: ${(p) => p.$w || 60}px;
  margin-right: 1px;
  background: #303237;
  color: #d8d9da;
  font: 13px/24px ${UI};
  display: flex;
  align-items: center;
  justify-content: center;
  padding: 2px 1px 0 0;
`;
const ModeSelect = styled.div`
  width: 136px;
  background: #26272b;
  padding: 0 0 0 25px;
  color: #d8d9da;
  font: 13px/23px ${UI};
  display: flex;
`;
const ModeName = styled.span`width: 67px;`;

const TrackToolIcons = () => (
  <Art x={4} y={111} w={317} h={38}>
    <path d="M10 125h20M10 129.300h20M10 133.600h20M10 137.500h20" stroke="#9b9da0" strokeWidth="2.200" />
    <path d="M54 126v14" stroke="#a0a2a4" strokeWidth="3.600" /><circle cx="54" cy="123" r="2" fill="#a0a2a4" />
    <g transform="translate(79 121)" fill="#a0a2a4"><path d="M4 .5q7-1 9 5l-.5 3 6.500 7-2.500 3-7.500-7q-6 2-9-4l4 .5 3-2 0-3z" /></g>
    <g stroke="#a3a5a7" strokeWidth="1.500"><path d="M148 139q2-14 8-16M156 123q5 8 7 15 6-3 10-15" /></g>
    <g fill="#a3a5a7"><circle cx="148" cy="139" r="2" /><circle cx="156" cy="123" r="2" /><circle cx="164" cy="138.500" r="2" /><circle cx="173" cy="123" r="2" /><circle cx="174" cy="129" r="1" /></g>
    <path d="M190 140v-18h19l-5 9h-14" stroke="#a0a2a4" strokeWidth="1.800" />
    <path d="M225 122.500h17.500" stroke="#a0a2a4" strokeWidth="1.800" strokeDasharray="5 1.300" />
    <path d="M231 125.500h5v5.500h-5zM237.500 125.500h5v5.500h-5zM225 134h5v6h-5zM231.300 132.500h5v7.500h-5z" fill="#a0a2a4" />
    <circle cx="268.500" cy="131" r="8.700" stroke="#a0a2a4" strokeWidth="1.900" />
    <path d="M268.500 122v9l-6 5.500M268.500 131l6 5.500" stroke="#a0a2a4" strokeWidth="1.700" /><path d="M268.500 129l5 7q-5 4-10 0z" fill="#6d7073" />
    <path d="M303 122v18M294 131h18.500" stroke="#a3a5a7" strokeWidth="4.200" />
  </Art>
);

const Arrange = () => (
  <ArrangePanel>
    <ArrangeTop>
      <TrackColumn>
        <TrackTools><TrackToolIcons /></TrackTools>
        <TrackList>
          <TrackRow $h={22}>
            <ColorStrip $c="#a23fa0"><AutoTag><Zig /></AutoTag></ColorStrip>
            <NumberCell />
            <TrackBody><Art x={47} y={151} w={165} h={4}><path d="M47 151h133v2H47zM181 151h30v2h-30z" fill="#54575a" /></Art></TrackBody>
            <TrackMeter />
          </TrackRow>
          {tracks.map((t) => <Track key={t[0]} t={t} />)}
        </TrackList>
      </TrackColumn>
      <Timeline />
    </ArrangeTop>
    <FooterBar>
      <FooterButton>M</FooterButton>
      <FooterButton>S</FooterButton>
      <FooterButton $w={59}>
        <svg width="14" height="14" viewBox="0 0 14 14" fill="none"><path d="M4 2.500a5.300 5.300 0 1 0 6 0M7 0v7" stroke="#3a97dc" strokeWidth="2.200" /></svg>
      </FooterButton>
      <ModeSelect>
        <ModeName>Normal</ModeName>
        <Art x={278} y={943} w={38} h={20}>
          <path d="M278 951.500h10l-5 6.500z" fill="#88898c" />
          <path d="M304 949h10M304 953h10M304 957h10" stroke="#77797d" strokeWidth="2.600" />
        </Art>
      </ModeSelect>
      <Art x={322} y={943} w={1119} h={21}>
        <path d="M339 948v11l-7.500-5.500zM1267.500 948v11l7.500-5.500z" fill="#7a7c80" />
        <rect x="636" y="950" width="125" height="7" fill="#77787b" />
        <path d="M1289 958h12l-6-9zM1394 960h17l-8.500-12z" fill="#6d7075" />
        <path d="M1305 954h82" stroke="#6d7075" strokeWidth="2" /><rect x="1311" y="947" width="5" height="14" fill="#7a7d82" />
        <path d="M1429 945h8v4h-8zM1429 950.500h8v3.500h-8zM1421 955h5v2.500h-5zM1421 959h5v2.500h-5z" fill="#505459" />
      </Art>
    </FooterBar>
  </ArrangePanel>
);

/* ---------- browser panel ---------- */

const BrowserPanel = styled.aside`
  width: 469px;
  height: 855px;
  margin: 2px 0 0 3px;
  border: 1px solid #000;
  display: flex;
  flex-direction: column;
  background: #27282c;
`;
const BrowserTabs = styled.div`
  height: 39px;
  padding: 2px 0 0 7px;
  border-bottom: 1px solid #111;
  display: flex;
  background: linear-gradient(#313438 0 2px, #25282b 2px);
`;
const BrowserTab = styled.div`
  width: ${(p) => p.$w}px;
  height: ${(p) => (p.$on ? 37 : 36)}px;
  padding-left: ${(p) => p.$pl || 0}px;
  background: ${(p) => (p.$on ? "#4a4c54" : "transparent")};
  color: ${(p) => (p.$on ? "#eceded" : "#c3c5c7")};
  font: 14.500px/36px ${UI};
  letter-spacing: -0.05px;
`;
const SortRow = styled.div`
  height: 25px;
  padding-left: 6px;
  display: flex;
  background: #4a4c54;
  font: 14.400px/25px ${UI};
  color: #b9bbbe;
`;
const SortItem = styled.span`
  width: ${(p) => p.$w}px;
  color: ${(p) => (p.$on ? "#e2e3e4" : p.$label ? "#b9bbbe" : "#8c8f94")};
`;
const Crumbs = styled.div`
  height: 28px;
  padding-left: 6px;
  border-bottom: 2px solid #1d1e20;
  background: #333539;
  font: 14.400px/28px ${UI};
  color: #d8d9da;
  display: flex;
`;
const CrumbArrow = styled.span`
  margin-left: 14.500px;
  color: #3a97dc;
`;
const TreeArea = styled.div`
  height: 636px;
  display: flex;
  justify-content: space-between;
`;
const TreeList = styled.div`width: 440px;`;
const TreeItem = styled.div`
  height: 27.500px;
  padding-left: ${(p) => 33 + p.$level * 15}px;
  display: flex;
  align-items: center;
  color: #bcbec0;
  font: ${(p) => (p.$bold ? "bold 15.200px" : "15.400px")} ${UI};
`;
const TreeIcon = styled.div`
  width: 20px;
  height: 20px;
  margin: 0 ${(p) => (p.$root ? 5 : 6.500)}px 0 5px;
  border-radius: 2px;
  background: ${(p) => (p.$boxed ? "#4a4e56" : "transparent")};
  display: flex;
  align-items: center;
  justify-content: center;
`;
const FxMark = styled.div`
  display: flex;
  flex-direction: column;
  align-items: center;
  color: #e6e7e8;
  font: bold 10.500px/10px ${UI};
  letter-spacing: 0.5px;
`;
const InfoPane = styled.div`
  flex: 1;
  padding: 8px 0 0 12px;
  display: flex;
  background: #33363a;
`;
const InfoText = styled.div`
  margin-left: 10.500px;
  display: flex;
  flex-direction: column;
`;
const InfoTitle = styled.span`
  font: 18.500px/24px ${UI};
  color: #e8e9e9;
`;
const InfoSub = styled.span`
  font: 14.300px/20px ${UI};
  color: #b9bbbd;
`;

const Fx = () => (
  <FxMark>FX<svg width="16" height="6" viewBox="0 0 16 6" fill="none"><rect x="1" y="1" width="6" height="3.600" rx="1.800" stroke="#c5c7c9" strokeWidth="1.200" /><rect x="8.500" y="1" width="6" height="3.600" rx="1.800" stroke="#c5c7c9" strokeWidth="1.200" /><path d="M5 2.800h6" stroke="#c5c7c9" /></svg></FxMark>
);
const Folder = () => (
  <svg width="20" height="15" viewBox="0 0 20 15"><path d="M0 2q0-2 2-2h4.500l2 2H19v12.500H0z" fill="#8b96a3" /><path d="M0 3.500h18V14.500H0z" fill="#c9ccce" /></svg>
);
const FolderOpen = () => (
  <svg width="20" height="13" viewBox="0 0 20 13"><path d="M0 2q0-2 2-2h4.500l2 2H15v2L4 12H0z" fill="#8b96a3" /><path d="M5.500 4h14.500l-4 8.500H0z" fill="#cfd2d4" /></svg>
);

const tree = [
  [0, "FX Chains", "fx0", 1], [1, "default", "fx"], [1, "Bass", "dir"], [1, "Drums", "dir"], [1, "Guitar", "dir"], [1, "Instruments", "dir"],
  [1, "Mastering", "dir"], [1, "Mixing", "dir"], [1, "Send", "dir"], [1, "Vocals", "open", 1],
  ...["Backing Vocal", "Busted Speaker", "Dreamy", "Female Live", "Female Pop", "Female Vocals", "Female Vocals Louder", "Male Live", "Male Pop", "Male Rock", "Male Vocal", "Male Vocal Louder", "Megaphone"].map((n) => [2, n, "fx"]),
];

const Browser = () => (
  <BrowserPanel>
    <BrowserTabs>
      <Art x={1456} y={113} w={30} h={36}><path d="M1456 133l7.500-10.500 7.500 10.500h-2v5h-4v-5h-3v5h-4v-5z" fill="#a5a7aa" /></Art>
      <BrowserTab $w={83}>Instruments</BrowserTab>
      <BrowserTab $w={58} $pl={7} $on>Effects</BrowserTab>
      <BrowserTab $w={63} $pl={8}>Loops</BrowserTab>
      <BrowserTab $w={44}>Files</BrowserTab>
      <BrowserTab $w={52}>Cloud</BrowserTab>
      <BrowserTab $w={49}>Shop</BrowserTab>
      <BrowserTab $w={58}>Pool</BrowserTab>
      <Art x={1893} y={113} w={20} h={36}><circle cx="1901" cy="128.500" r="5" stroke="#a5a7aa" strokeWidth="2.200" /><path d="M1904.500 132l6 6" stroke="#a5a7aa" strokeWidth="3" /></Art>
    </BrowserTabs>
    <SortRow>
      <SortItem $w={74} $label>Sort by:</SortItem>
      <SortItem $w={38}>Flat</SortItem>
      <SortItem $w={55}>Folder</SortItem>
      <SortItem $w={60} $on>Vendor</SortItem>
      <SortItem $w={158}>Type</SortItem>
      <Art x={1840} y={150} w={76} h={25}>
        <path d="M1848 157q5-1 6.500 3l-.3 2.500 5 5-2 2.300-5.500-5q-4 1.500-6-2.500l3 0 2-1.500 0-2z" fill="#a5a7aa" />
        <rect x="1872" y="156.500" width="13.500" height="12" rx="1" stroke="#fff" strokeWidth="1.800" /><path d="M1871 157.500h15.500" stroke="#fff" strokeWidth="3.500" />
        <path d="M1896 156.500h15M1901 161h10M1903 165h8M1905 169h6" stroke="#fff" strokeWidth="2.500" />
      </Art>
    </SortRow>
    <Crumbs>Effects<CrumbArrow>&gt;</CrumbArrow></Crumbs>
    <TreeArea>
      <TreeList>
        {tree.map(([lv, name, kind, open]) => (
          <TreeItem key={name + lv} $level={lv} $bold={name === "default"}>
            <svg width="8" height="12" viewBox="0 0 8 12"><path d={open ? "M7.500 2v7.500H0z" : "M1.500 1v10l5.500-5z"} fill="#cdcfd0" /></svg>
            <TreeIcon $root={kind === "fx0"} $boxed={kind === "fx"}>
              {kind === "dir" ? <Folder /> : kind === "open" ? <FolderOpen /> : <Fx />}
            </TreeIcon>
            {name}
          </TreeItem>
        ))}
      </TreeList>
      <Art x={1896} y={203} w={20} h={636}>
        <path d="M1901.500 215h11l-5.500-8zM1901.500 825h11l-5.500 7.500z" fill="#6f7174" />
        <rect x="1904" y="225" width="6" height="88" fill="#606266" />
      </Art>
    </TreeArea>
    <InfoPane>
      <Art x={1461} y={847} w={41} h={44}>
        <path d="M1461 860q1-3 4-3h10q3 0 4 4h22v26h-40z" fill="#909eac" />
        <path d="M1461 863h39.500v24.500h-39.500z" fill="#dadde0" />
      </Art>
      <InfoText>
        <InfoTitle>Effects</InfoTitle>
        <InfoSub>Effects</InfoSub>
      </InfoText>
    </InfoPane>
  </BrowserPanel>
);

/* ---------- transport ---------- */

const TransportBar = styled.div`
  height: 61px;
  flex: none;
  display: flex;
  background: linear-gradient(#5d6169 0 53px, #43474b 56px, #35383b 59px, #505356 61px);
`;
const Display = styled.div`
  width: 1668px;
  height: 53px;
  margin-left: 18px;
  display: flex;
  background: linear-gradient(#141414 0 52px, #94979a 52px);
  clip-path: polygon(0 0, 100% 0, 1652px 100%, 12px 100%);
`;
const Readout = styled.div`
  width: ${(p) => p.$w}px;
  padding-top: 7.500px;
  padding-left: ${(p) => p.$pl || 0}px;
  display: flex;
  flex-direction: column;
  align-items: ${(p) => (p.$left ? "flex-start" : "center")};
`;
const ReadTop = styled.div`
  height: 21px;
  margin-left: ${(p) => p.$ml || 0}px;
  font: 15.400px/21px ${UI};
  color: ${(p) => p.$c || "#e0e1e2"};
`;
const MainTime = styled.div`
  height: 21px;
  margin-left: 17px;
  font: bold 22px/20px ${UI};
  color: #cccdce;
  letter-spacing: 1.05px;
`;
const ReadSub = styled.div`
  height: 20px;
  margin-top: ${(p) => p.$up || 0}px;
  margin-left: ${(p) => p.$ml || 0}px;
  font: 13.500px/20px ${UI};
  color: #8b8e91;
`;
const Locators = styled.div`
  width: 134px;
  padding-top: 7px;
  font: 16px/19.500px ${UI};
  color: #e0e1e2;
`;
const LocatorRow = styled.div`display: flex;`;
const LocatorKey = styled.span`
  width: 18px;
  color: #3d6d86;
  font-weight: bold;
  font-size: 15px;
`;
const ViewTab = styled.div`
  width: ${(p) => p.$w}px;
  height: ${(p) => (p.$on ? 55 : 61)}px;
  border-left: 2px solid #43464b;
  padding: 22px 1px 0 0;
  text-align: center;
  color: ${(p) => (p.$on ? "#fff" : "#d6d8da")};
  background: ${(p) => (p.$on ? "#3693d6" : "transparent")};
  font: 15.200px/18px ${UI};
`;

const Transport = () => (
  <TransportBar>
    <Display>
      <Spacer $w={44} />
      <Readout $w={48}>
        <Art x={68} y={977} w={37} h={21}>
          <circle cx="86.500" cy="986.500" r="8" stroke="#5f6265" strokeWidth="1.600" />
          <g fill="#5f6265"><circle cx="82" cy="984" r="1.400" /><circle cx="86.500" cy="981.500" r="1.400" /><circle cx="91" cy="984" r="1.400" /><circle cx="82" cy="989" r="1.400" /><circle cx="91" cy="989" r="1.400" /><path d="M85.500 991h2v3h-2zM69.500 983v8l5-4zM99 983v8l5-4z" /></g>
        </Art>
        <ReadSub>MIDI</ReadSub>
      </Readout>
      <Readout $w={93}>
        <Art x={115.5} y={977} w={82} h={21}>
          <path d="M116 979h81v6h-81zM116 988h81v6h-81z" fill="#24262a" /><path d="M116 979h75v6h-75zM116 988h75v6h-75z" fill="#33363c" /><path d="M116 979h3v6h-3z" fill="#59a5cf" />
        </Art>
        <ReadSub $up={-1} $ml={4}>Performance</ReadSub>
      </Readout>
      <Art x={203} y={969} w={61} h={52}>
        {Array.from({ length: 14 }, (_, i) => {
          const a = (i / 14) * Math.PI * 2;
          return <circle key={i} cx={233 + 13.5 * Math.sin(a)} cy={995.5 - 13.5 * Math.cos(a)} r="1.600" fill="#a9abad" />;
        })}
      </Art>
      <Readout $w={92} $left>
        <ReadTop>3:21 days</ReadTop>
        <ReadSub $up={-0.5}>Record Max</ReadSub>
      </Readout>
      <Readout $w={120}>
        <ReadTop $c="#9b9da0" $ml={13}>00:02:27.905</ReadTop>
        <ReadSub $up={-0.5}>Seconds</ReadSub>
      </Readout>
      <Readout $w={201} $pl={12}>
        <MainTime>00074.04.04.24</MainTime>
        <ReadSub $up={-0.5}>Bars</ReadSub>
      </Readout>
      <Art x={677} y={969} w={391} h={52}>
        <g fill="#c0c1c2">
          <path d="M713 987v16l-14-8zM738.500 987v16l-12-8zM749 987v16l-12-8zM766.500 987v16l12-8zM777 987v16l12-8zM799 987v16l14-8zM845 987v16l-12.500-8zM830 987h1.600v16h-1.600z" />
          <path d="M919 983v25l22-12.500z" /><circle cx="971.500" cy="995.500" r="12.500" />
        </g>
        <rect x="871" y="983" width="25" height="25" fill="#31b2dc" />
        <path d="M1019.500 997l-4 10h-1.500q-9-1-9-11.500t9-11h20q9 .5 9 11t-9 11.500h-9.500l5-10" stroke="#8f9193" strokeWidth="2.600" />
      </Art>
      <Locators>
        <LocatorRow><LocatorKey>L</LocatorKey>00001.01.01.00</LocatorRow>
        <LocatorRow><LocatorKey>R</LocatorKey>00074.01.01.00</LocatorRow>
      </Locators>
      <Art x={1202} y={969} w={90} h={52}>
        <path d="M1227 982h5l6 6h10M1227 988h3M1233 988h2" stroke="#909294" strokeWidth="1.700" />
        <path d="M1262 980.500v11" stroke="#909294" strokeWidth="1.600" /><path d="M1265 986h4" stroke="#909294" strokeDasharray="1.500 1" strokeWidth="1.500" /><path d="M1269 981h2v3h8v5h-8v2.500h-2z" fill="#909294" />
        <circle cx="1236.500" cy="1006" r="4" stroke="#909294" strokeWidth="2.500" />
        <path d="M1236.500 999.500v2M1236.500 1010.500v2M1230 1006h2M1241 1006h2M1232 1001.500l1.500 1.500M1239.500 1009l1.500 1.500M1241 1001.500l-1.500 1.500M1233.500 1009l-1.500 1.500" stroke="#909294" strokeWidth="2" />
        <path d="M1258 1006.500h5M1275.500 1006.500h5" stroke="#909294" strokeDasharray="1.500 1" strokeWidth="1.500" /><path d="M1264 1000.500h2v3h8v-3h2v12h-2v-3h-8v3h-2z" fill="#909294" />
      </Art>
      <Readout $w={77}>
        <Art x={1295} y={977} w={70} h={21}>
          <circle cx="1304.500" cy="986" r="5.700" fill="#6f7877" />
          <path d="M1324 980.500q5-1 6.500 3l-.3 2.500 5 5-2 2.300-5.500-5q-4 1.500-6-2.500l3 0 2-1.500 0-2z" fill="#909294" />
          <path d="M1349 993l5-11h3l6 11z" fill="#909294" /><path d="M1354 984l3.500 5.500 2-5" stroke="#141414" strokeWidth="0.900" /><path d="M1350 980l7 10" stroke="#909294" strokeWidth="1.200" />
        </Art>
        <ReadSub>Metronome</ReadSub>
      </Readout>
      <Readout $w={75}>
        <ReadTop>4 / 4</ReadTop>
        <ReadSub>Timing</ReadSub>
      </Readout>
      <Readout $w={60}>
        <ReadTop $ml={-1}>120.00</ReadTop>
        <ReadSub $up={-0.5} $ml={-1}>Tempo</ReadSub>
      </Readout>
      <Art x={1504} y={969} w={135} h={52}>
        <path d="M1520 979h112v11h-112z" fill="#1b1b1c" /><path d="M1520 979h84v5h-84zM1520 985.200h84v5h-84z" fill="#3a3c42" />
        <path d="M1520.500 1005.500h55" stroke="#4795b8" strokeWidth="11" strokeDasharray="1.600 1.200" /><path d="M1577 1005.500h27" stroke="#45474c" strokeWidth="11" strokeDasharray="1.600 1.200" /><path d="M1575 1000h1.500v11h-1.500z" fill="#dcecf4" />
        <g><circle cx="1617.500" cy="1005.500" r="5.700" fill="#4dbbe0" /><circle cx="1627.500" cy="1005.500" r="4.700" stroke="#4dbbe0" strokeWidth="2" /></g>
      </Art>
    </Display>
    <Spacer $w={11.500} />
    <ViewTab $w={70}>Edit</ViewTab>
    <ViewTab $w={69.500}>Mix</ViewTab>
    <ViewTab $w={83} $on>Browse</ViewTab>
  </TransportBar>
);

/* ---------- taskbar ---------- */

const TaskbarRow = styled.footer`
  height: 50px;
  flex: none;
  display: flex;
  background: linear-gradient(90deg, #32262c 0, #451c1f 60px, #2a2730 300px, #23282f 495px, #1f2a2f 620px, #263634 800px, #1d2b32 1080px, #1f3031 1220px, #2b2d33 1420px, #272836 1600px, #2a333c 1740px, #3d2126 1850px, #441b1e 1920px);
`;
const SearchBox = styled.div`
  width: 430px;
  border: 1px solid #c3c5c6;
  background: #f2f2f2;
  margin-left: 60px;
  display: flex;
  align-items: center;
  color: #222;
  font: 17.800px ${WIN};
`;
const StartButton = styled.div`
  width: 60px;
  margin-right: -60px;
  display: flex;
`;
const AppTile = styled.div`
  width: ${(p) => p.$w}px;
  height: 50px;
  background: ${(p) => (p.$on ? "#506061" : "transparent")};
  border-bottom: ${(p) => (p.$on ? "3px solid #76b9ed" : 0)};
`;
const Clock = styled.div`
  width: 78px;
  display: flex;
  flex-direction: column;
  align-items: center;
  padding-top: 3px;
  color: #fff;
  font: 14.600px/22.500px ${WIN};
  letter-spacing: -0.35px;
`;
const NoticeCell = styled.div`
  position: relative;
  width: 67px;
  margin-left: 2px;
`;
const NoticeCount = styled.span`
  position: absolute;
  left: 31px;
  top: 25px;
  color: #fff;
  font: 14px/19px ${WIN};
`;

const Taskbar = () => (
  <TaskbarRow>
    <StartButton><Art x={0} y={1030} w={60} h={50}><path d="M20 1047.500l8-1.200v8.200h-8zM29 1046.200l11-1.500v9.800h-11zM20 1055.500h8v8.200l-8-1.200zM29 1055.500h11v9.800l-11-1.500z" fill="#fff" /></Art></StartButton>
    <SearchBox>
      <Art x={61} y={1031} w={49} h={48}><circle cx="88" cy="1052" r="6.500" stroke="#222" strokeWidth="1.500" /><path d="M83.500 1057l-8 8" stroke="#222" strokeWidth="1.600" /></Art>
      Type here to search
    </SearchBox>
    <AppTile $w={60}><Art x={490} y={1030} w={60} h={50}><circle cx="520" cy="1055" r="8.300" stroke="#fff" strokeWidth="2.300" /></Art></AppTile>
    <AppTile $w={66}><Art x={550} y={1030} w={66} h={50}>
      <path d="M570 1045.500v4h12.500v-4M570 1064.500v-4h12.500v4M571 1051.500h11v7h-11zM588.500 1045v5M588.500 1056v9" stroke="#fff" strokeWidth="1.400" /><path d="M587 1051h3v3h-3z" fill="#fff" /></Art></AppTile>
    <AppTile $w={60}><Art x={616} y={1030} w={60} h={50}>
      <defs><linearGradient id="eg" x1="0" x2="1" y2=".5"><stop stopColor="#2cabe6" /><stop offset=".55" stopColor="#35c8c0" /><stop offset="1" stopColor="#66e04e" /></linearGradient></defs>
      <circle cx="644" cy="1055" r="14.800" fill="#0f75d0" />
      <path d="M629.500 1052q2-12 14.500-12 13 0 14.700 12 .5 8-9 8.500-5 0-4.500-2.500 2-5-3-7.500-6-2-12.700 1.500z" fill="url(#eg)" />
      <path d="M641 1052q-6 6 0 13 6 5 13 .5-4 5-10.500 4.300-9-1-9.500-9.500.5-7 7-8.300z" fill="#0c4c96" />
      <path d="M644 1052q3 2 .5 6 0 3 6 3 5-.5 8-4-1 5-5 8-9 2-11.500-5-1-5 2-8z" fill="#1f2c31" /></Art></AppTile>
    <AppTile $w={61}><Art x={676} y={1030} w={61} h={50}>
      <path d="M692 1043h11l2 3h15v21h-28z" fill="#e0a10c" /><path d="M692 1047h28v20h-28z" fill="#fbd367" />
      <path d="M697 1068v-9q0-3 3-3h12q3 0 3 3v9h-4.500v-6h-9v6z" fill="#2f87d1" /><path d="M681 1077h51v3h-51z" fill="#76b9ed" /></Art></AppTile>
    <AppTile $w={62}><Art x={737} y={1030} w={62} h={50}>
      <path d="M761 1050v-8.500h13v8.500" stroke="#e8e8e8" strokeWidth="2.500" /><path d="M753 1048.500h29v21.500h-29z" fill="#f2f2f2" />
      <path d="M762 1054h5.200v5h-5.200z" fill="#f25022" /><path d="M768.200 1054h5.200v5h-5.200z" fill="#7fba00" /><path d="M762 1060h5.200v5h-5.200z" fill="#00a4ef" /><path d="M768.200 1060h5.200v5h-5.200z" fill="#ffb900" /></Art></AppTile>
    <AppTile $w={62}><Art x={799} y={1030} w={62} h={50}>
      <circle cx="830" cy="1055" r="12.500" fill="#0a84cf" stroke="#e8f2f8" strokeWidth="1.500" />
      <path d="M826 1058.500l8-6.500" stroke="#fff" strokeWidth="2.800" /><circle cx="825.500" cy="1058.500" r="2.500" stroke="#fff" strokeWidth="1.800" /><path d="M838 1050q0 4.500-4 5t-3-4 4-3.500l-1.500 2.700 2 1.300z" fill="#fff" /></Art></AppTile>
    <AppTile $w={62}><Art x={861} y={1030} w={62} h={50}>
      <path d="M877 1050l15-9 15 9v18.500h-30z" fill="#0f5fae" /><path d="M880 1049.500h25v10h-25z" fill="#f0f0f0" />
      <path d="M877 1050l15 10.500 15-10.500v18.500h-30z" fill="#3ab8f3" /><path d="M877 1050l15 10.500 15 8h-30z" fill="#1f8fe0" /></Art></AppTile>
    <AppTile $w={63}><Art x={923} y={1030} w={63} h={50}>
      <circle cx="954" cy="1055" r="14" fill="#2aa24f" /><path d="M954 1055L941.900 1048a14 14 0 0 1 24.200 0z" fill="#e04438" /><path d="M954 1048.500h12.500A14 14 0 0 1 953 1069l6.500-11z" fill="#fcc934" /><path d="M941.900 1048a14 14 0 0 1 24.200 0.500H954z" fill="#e04438" />
      <circle cx="954" cy="1055" r="6.800" fill="#fff" /><circle cx="954" cy="1055" r="5.300" fill="#4286f0" /></Art></AppTile>
    <AppTile $w={61} $on><Art x={986} y={1030} w={61} h={47}><g transform="translate(1003 1041)"><LogoArt /></g></Art></AppTile>
    <Spacer />
    <Art x={1615} y={1030} w={158} h={50}>
      <path d="M1627.500 1060l7.500-8.500 7.500 8.500" stroke="#fff" strokeWidth="1.400" />
      <path d="M1656 1056q1-7 8-8 7-1 9 6l-12 6h-4q-3-1-1-4z" fill="#b9bcc0" /><path d="M1655 1058q2-4 7-2 6-5 9 1 5-.5 5 3.500-.5 1.500-2 2h-16q-4-1-3-4.500z" fill="#fff" />
      <path d="M1690.500 1050h13.500v11.500h-14v-4" stroke="#fff" strokeWidth="1.400" /><path d="M1692.500 1052h9.500v7.500h-9.500zM1704.500 1053.500h1.500v4h-1.500z" fill="#fff" /><path d="M1686 1048v3q0 3 2 3.500v4M1690 1048v3q0 3-2 3.500M1685.500 1051h5" stroke="#fff" strokeWidth="1.400" />
      <path d="M1718.500 1062q0-12 13-13.500M1721.500 1062.500q1-9 11-10M1724.500 1063q1-6 8-7M1727.500 1063.500q1-4 5-4" stroke="#fff" strokeWidth="1.200" /><circle cx="1731.500" cy="1062.500" r="1.500" fill="#fff" />
      <path d="M1745.500 1052h3l4-4v14l-4-4h-3z" stroke="#fff" strokeWidth="1.300" /><path d="M1755.500 1052.500q2 2.500 0 5.500M1758.500 1050q4 5 0 10.500M1761.500 1047.500q6 7.500 0 15.500" stroke="#fff" strokeWidth="1.200" />
    </Art>
    <Clock><span>12:55 PM</span><span>9/26/2020</span></Clock>
    <NoticeCell>
      <Art x={1853} y={1030} w={67} h={50}>
        <path d="M1869 1045h20v17h-8l-4 3v-3h-8z" fill="#fff" /><path d="M1873 1050h12M1873 1053.500h12M1873 1057h8" stroke="#3c2024" strokeWidth="1.300" />
        <circle cx="1888.500" cy="1064.500" r="9.500" fill="#32282b" stroke="#a9a4a5" />
        <path d="M1915 1030v50" stroke="#8a7476" />
      </Art>
      <NoticeCount>1</NoticeCount>
    </NoticeCell>
  </TaskbarRow>
);

export default function App() {
  return (
    <Screen>
      <Global />
      <TitleBar>
        <Spacer $w={3} />
        <svg width="18" height="19" viewBox="0 0 26.400 28" fill="none"><LogoArt /></svg>
        <TitleText>Studio One - Hellwalker</TitleText>
        <Art x={1760} y={0} w={160} h={28}>
          <path d="M1765 13.500h12M1823.500 11.500h8.500v8.500h-8.500zM1826 11v-2.500h9v9h-2.500M1882.500 8.500l11.500 11.500M1894 8.500l-11.500 11.500" stroke="#000" strokeWidth="1.200" />
        </Art>
      </TitleBar>
      <MenuBar>{menus.map(([m, w]) => <MenuItem key={m} $w={w}>{m}</MenuItem>)}</MenuBar>
      <Toolbar />
      <Workspace>
        <Arrange />
        <Browser />
      </Workspace>
      <Transport />
      <Taskbar />
    </Screen>
  );
}
